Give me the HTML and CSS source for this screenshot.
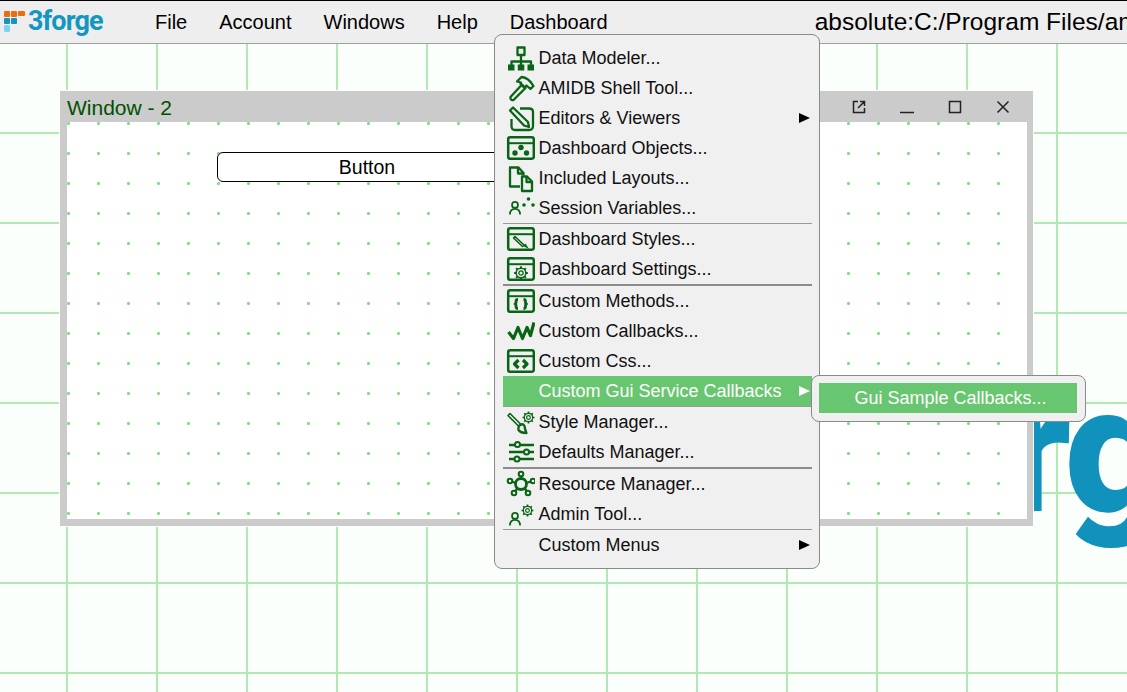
FILE: index.html
```html
<!DOCTYPE html>
<html lang="en">
<head>
<meta charset="utf-8">
<title>3forge</title>
<link rel="stylesheet" href="styles.css">
</head>
<body>
<div class="app">
  <header class="topbar">
    <div class="brand">
      <svg class="brand-mark" width="28" height="44" viewBox="0 0 28 44">
        <rect x="4" y="11" width="6" height="6" rx="1" fill="#f26a0f"/>
        <rect x="11" y="11" width="6" height="6" rx="1" fill="#f26a0f"/>
        <rect x="18" y="11" width="7" height="5" rx="1" fill="#f26a0f"/>
        <rect x="4" y="18" width="6" height="6" rx="1" fill="#1496c0"/>
        <rect x="11" y="18" width="6" height="6" rx="1" fill="#1496c0"/>
        <rect x="4" y="25" width="6" height="7" rx="1.5" fill="#7fd0f5"/>
      </svg>
      <span class="brand-name">3forge</span>
    </div>
    <nav class="nav">
      <span>File</span><span>Account</span><span>Windows</span><span>Help</span><span>Dashboard</span>
    </nav>
    <div class="path">absolute:C:/Program Files/ami/amione/data/layouts</div>
  </header>

  <main class="canvas">
    <div class="watermark">3forge</div>

    <section class="window">
      <div class="win-title">
        <span class="win-name">Window - 2</span>
        <div class="win-controls">
          <svg width="16" height="16" viewBox="0 0 16 16"><path d="M7 2.500H2.500v11h11V9M9 2.500h4.500V7M13.500 2.500L7 9"/></svg>
          <svg width="16" height="16" viewBox="0 0 16 16"><path d="M1 13.500h14"/></svg>
          <svg width="16" height="16" viewBox="0 0 16 16"><path d="M2.500 2.500h11v11h-11z"/></svg>
          <svg width="16" height="16" viewBox="0 0 16 16"><path d="M2.500 2.500l11 11M13.500 2.500l-11 11"/></svg>
        </div>
      </div>
      <div class="win-body">
        <div class="btn">Button</div>
      </div>
    </section>
  </main>

  <svg class="defs" width="0" height="0">
    <defs>
      <symbol id="gear" viewBox="0 0 14 14">
        <circle cx="7" cy="7" r="2" fill="none" stroke="currentColor" stroke-width="1.200"/>
        <circle cx="7" cy="7" r="4.500" fill="none" stroke="currentColor" stroke-width="1.400"/>
        <path d="M7 .6v2M7 11.400v2M.6 7h2M11.400 7h2M2.400 2.400l1.500 1.500M10.100 10.100l1.500 1.500M2.400 11.600l1.500-1.500M10.100 3.900l1.500-1.500" stroke="currentColor" stroke-width="1.800" fill="none"/>
      </symbol>
      <symbol id="frame" viewBox="0 0 30 30">
        <rect x="3.200" y="4.200" width="25.600" height="21.600" rx="2" fill="none" stroke="currentColor" stroke-width="2.500"/>
        <path d="M3 10.200h26" stroke="currentColor" stroke-width="2" fill="none"/>
      </symbol>
      <symbol id="person" viewBox="0 0 14 16">
        <circle cx="7" cy="4.500" r="3.400" fill="none" stroke="currentColor" stroke-width="2"/>
        <path d="M1.200 15.500c0-4.500 2.500-6.500 5.800-6.500s5.800 2 5.800 6.500" fill="none" stroke="currentColor" stroke-width="2"/>
      </symbol>
    </defs>
  </svg>

  <div class="menu">
    <div class="item">
      <svg class="ico" viewBox="0 0 30 30"><path class="s" d="M12.500 4.500h7v7.500h-7zM16 12v6M6.500 23v-4.500h19.500V23M16 18v5"/><path class="f" d="M3 21.500h6.500v6H3zM12.800 21.500h6.500v6h-6.500zM22.500 21.500H29v6h-6.500z"/></svg>
      <span>Data Modeler...</span>
    </div>
    <div class="item">
      <svg class="ico" viewBox="0 0 30 30"><path class="s" d="M5.500 24L17 11.500l3.500 3.500L8.500 27q-3.500 .5-3-3zM12 8.500L16.500 4q7 .5 12 9l-3 3-4-3.500-2 2.500-4-4 .5-1.500z"/></svg>
      <span>AMIDB Shell Tool...</span>
    </div>
    <div class="item">
      <svg class="ico" viewBox="0 0 30 30"><path class="s" d="M15 5.500h9q4 0 4 3.500v14q0 4-4 4H10q-3.500 0-3.500-4v-7"/><path class="s" d="M5 7.500l3-3 15 14.500 1 5-5-1.500z"/></svg>
      <span>Editors &amp; Viewers</span>
      <i class="caret"></i>
    </div>
    <div class="item">
      <svg class="ico" viewBox="0 0 30 30"><use href="#frame"/><circle class="f" cx="10" cy="20" r="2.700"/><circle class="f" cx="21.500" cy="20" r="2.700"/><circle class="f" cx="16" cy="14.500" r="2.700"/></svg>
      <span>Dashboard Objects...</span>
    </div>
    <div class="item">
      <svg class="ico" viewBox="0 0 30 30"><path class="s" d="M15 23.500H5V4.500h8.500l5 5.500v2.500"/><path class="s" d="M13 4.500v6h5"/><path class="s" d="M17 13.500h5l5 5v9.500H17z"/><path class="s" d="M21.500 13.500v5.500H27"/></svg>
      <span>Included Layouts...</span>
    </div>
    <div class="item">
      <svg class="ico" viewBox="0 0 30 30"><use href="#person" x="3.500" y="8" width="13" height="14"/><circle class="f" cx="19" cy="12" r="1.800"/><circle class="f" cx="23.500" cy="6" r="1.800"/><circle class="f" cx="28" cy="12" r="1.800"/></svg>
      <span>Session Variables...</span>
    </div>
    <hr class="sep">
    <div class="item">
      <svg class="ico" viewBox="0 0 30 30"><use href="#frame"/><path class="s thin" d="M8.500 14l1.500-1.500 9 8.500-1.500 1.500z"/><path class="f" d="M18 22l2.500-2.500 3.500 5.500z"/></svg>
      <span>Dashboard Styles...</span>
    </div>
    <div class="item">
      <svg class="ico" viewBox="0 0 30 30"><use href="#frame"/><use href="#gear" x="8.500" y="11.500" width="15" height="15"/></svg>
      <span>Dashboard Settings...</span>
    </div>
    <hr class="sep thick">
    <div class="item">
      <svg class="ico" viewBox="0 0 30 30"><use href="#frame"/><path class="s heavy2" d="M13 13.500q-2 0-2 2v1.500l-1 1 1 1v1.500q0 2 2 2M18.500 13.500q2 0 2 2v1.500l1 1-1 1v1.500q0 2-2 2"/></svg>
      <span>Custom Methods...</span>
    </div>
    <div class="item">
      <svg class="ico" viewBox="0 0 30 30"><path class="s heavy" d="M3.500 16l5 6.500 4.500-11 4.500 11 4.500-11 3.500 8 3.500-13"/></svg>
      <span>Custom Callbacks...</span>
    </div>
    <div class="item">
      <svg class="ico" viewBox="0 0 30 30"><use href="#frame"/><path class="s heavy" d="M13.500 14L9.500 18l4 4M18 14l4 4-4 4"/></svg>
      <span>Custom Css...</span>
    </div>
    <div class="item active">
      <svg class="ico" viewBox="0 0 30 30"></svg>
      <span>Custom Gui Service Callbacks</span>
      <i class="caret"></i>
    </div>
    <hr class="sep">
    <div class="item">
      <svg class="ico" viewBox="0 0 30 30"><path class="s thin" d="M3 8.500l2-2 11 11-2 2z"/><path class="s" d="M14 19q3.500-3.500 5.500 0 .5 4 2 7-6 0-8-3-.5-2 .5-4z"/><use href="#gear" x="17" y="4" width="13" height="13"/></svg>
      <span>Style Manager...</span>
    </div>
    <div class="item">
      <svg class="ico" viewBox="0 0 30 30"><path class="s" d="M4 8h6M15 8h14M4 15h15M24 15h5M4 22h6M15 22h14"/><circle class="k" cx="12.500" cy="7.500" r="2.500"/><circle class="k" cx="21.500" cy="15" r="2.500"/><circle class="k" cx="12" cy="22" r="2.500"/></svg>
      <span>Defaults Manager...</span>
    </div>
    <hr class="sep thick">
    <div class="item">
      <svg class="ico" viewBox="0 0 30 30"><path class="s" d="M16 5v5M5 12l6 2M28 12l-7 2M9 24l3.500-5M23 24l-3.500-5"/><circle class="k ring" cx="16" cy="15" r="5.500"/><circle class="k" cx="16" cy="5" r="2.300"/><circle class="k" cx="5" cy="12" r="2.300"/><circle class="k" cx="28" cy="12" r="2.300"/><circle class="k" cx="9" cy="24" r="2.300"/><circle class="k" cx="23" cy="24" r="2.300"/></svg>
      <span>Resource Manager...</span>
    </div>
    <div class="item">
      <svg class="ico" viewBox="0 0 30 30"><use href="#person" x="3.500" y="13" width="13" height="14"/><use href="#gear" x="16" y="5" width="13" height="13"/></svg>
      <span>Admin Tool...</span>
    </div>
    <hr class="sep">
    <div class="item">
      <svg class="ico" viewBox="0 0 30 30"></svg>
      <span>Custom Menus</span>
      <i class="caret"></i>
    </div>
  </div>

  <div class="submenu">
    <div class="subitem">Gui Sample Callbacks...</div>
  </div>
</div>
</body>
</html>
```

FILE: styles.css
```css
* { box-sizing: border-box; }
html, body { margin: 0; padding: 0; }
body { font-family: "Liberation Sans", Arial, sans-serif; color: #000; background: #fbfffb; }

.app { position: relative; width: 1127px; height: 692px; overflow: hidden; display: flex; flex-direction: column; }
.defs { position: absolute; }

.topbar { position: relative; z-index: 3; flex: none; height: 44px; display: flex; align-items: center; background: #eeeeee; border-top: 1px solid #000; border-bottom: 1px solid #a0a0a0; white-space: nowrap; font-size: 20px; overflow: hidden; }
.brand { flex: none; width: 155px; height: 44px; margin-top: -1px; display: flex; align-items: center; }
.brand-mark { flex: none; }
.brand-name { font-family: Roboto, sans-serif; font-weight: 700; font-size: 27px; letter-spacing: -.9px; color: #1496c0; position: relative; top: -1px; }
.nav { flex: none; display: flex; gap: 32px; }
.path { flex: none; margin-left: 207px; font-size: 24.500px; }

.canvas { position: relative; flex: 1; background-color: #fbfffb; background-image: linear-gradient(to right, #b2e9b2 2px, transparent 2px), linear-gradient(to bottom, #b2e9b2 2px, transparent 2px); background-size: 90px 90px; background-position: 66px 88px; }
.watermark { position: absolute; left: 751px; top: 296px; font-family: Roboto, sans-serif; font-weight: 900; font-size: 178px; letter-spacing: -5px; line-height: 220px; color: #1092bd; white-space: nowrap; }

.window { position: absolute; left: 60px; top: 47px; width: 973px; height: 435px; background: #cbcbcb; box-shadow: 0 0 0 1px #fbfffb; padding: 0 6px 7px 7px; display: flex; flex-direction: column; }
.win-title { flex: none; height: 31px; display: flex; align-items: center; justify-content: space-between; }
.win-name { font-size: 21px; padding-top: 3px; color: #005000; }
.win-controls { display: flex; gap: 32px; margin-right: 16px; }
.win-controls svg { fill: none; stroke: #222; stroke-width: 1.500; }
.win-body { position: relative; flex: 1; background-color: #fff; background-image: radial-gradient(circle at 1.500px 1.500px, #86dc86 1.200px, transparent 1.900px); background-size: 30px 30px; }
.btn { position: absolute; left: 150px; top: 30px; width: 300px; height: 30px; background: #fff; border: 1px solid #000; border-radius: 6px; display: flex; align-items: center; justify-content: center; font-size: 19.500px; }

.menu { position: absolute; z-index: 4; left: 494px; top: 34px; width: 326px; height: 535px; padding: 8px 7px 9px 8px; background: #f0f0f0; border: 1px solid #8a8a8a; border-radius: 8px; color: #111; font-size: 18px; }
.item { height: 30px; display: flex; align-items: center; white-space: nowrap; }
.ico { flex: none; width: 30px; height: 30px; margin: 0 3.500px 0 2px; color: #0a6415; }
.ico .s { fill: none; stroke: #0a6415; stroke-width: 2.300; stroke-linejoin: round; }
.ico .thin { stroke-width: 1.600; }
.ico .heavy { stroke-width: 3.200; }
.ico .heavy2 { stroke-width: 2.800; }
.ico .f { fill: #0a6415; }
.ico .k { fill: #f0f0f0; stroke: #0a6415; stroke-width: 2; }
.ico .ring { stroke-width: 2.800; }
.caret { margin-left: auto; margin-right: 2px; width: 0; height: 0; border-style: solid; border-width: 5px 0 5px 11px; border-color: transparent transparent transparent #000; }
.active { background: #68c670; color: #fff; }
.active .caret { border-left-color: #fff; }
.sep { height: 1px; margin: 0; border: 0; background: #9a9a9a; }
.sep.thick { height: 2px; background: #8c8c8c; }

.submenu { position: absolute; z-index: 5; left: 811px; top: 375px; width: 275px; height: 47px; padding: 7px 8px 7px 7px; background: #f0f0f0; border: 1px solid #8a8a8a; border-radius: 8px; }
.subitem { height: 30px; padding-left: 5px; background: #68c670; color: #fff; font-size: 18px; display: flex; align-items: center; justify-content: center; }
```
